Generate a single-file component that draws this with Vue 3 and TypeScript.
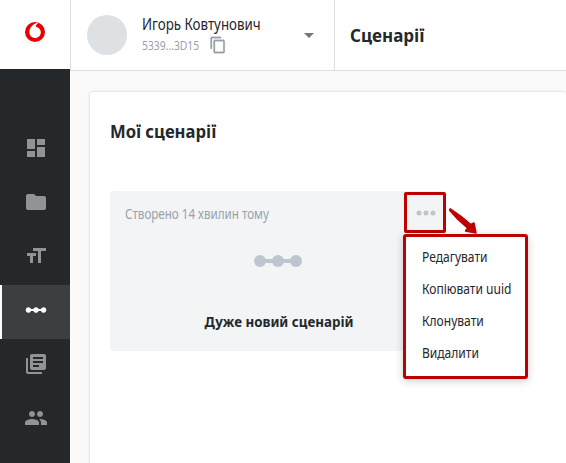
<script setup lang="ts">
interface NavItem {
  id: string
  path: string
  active?: boolean
}

const nav: NavItem[] = [
  { id: 'dashboard', path: 'M3 13h8V3H3v10zm0 8h8v-6H3v6zm10 0h8V11h-8v10zm0-18v6h8V3h-8z' },
  { id: 'files', path: 'M10 4H4c-1.1 0-1.99.9-1.99 2L2 18c0 1.1.9 2 2 2h16c1.1 0 2-.9 2-2V8c0-1.1-.9-2-2-2h-8l-2-2z' },
  { id: 'text', path: 'M9 4v3h5v12h3V7h5V4H9zm-6 8h3v7h3v-7h3V9H3v3z' },
  { id: 'scenarios', path: 'M22.300 12c0 1.500-1.200 2.700-2.700 2.700-1.200 0-2.200-.7-2.550-1.800h-2.500C14.200 14 13.200 14.700 12 14.700s-2.200-.7-2.550-1.800h-2.500C6.600 14 5.600 14.700 4.400 14.700c-1.500 0-2.700-1.200-2.700-2.700s1.200-2.700 2.700-2.700c1.200 0 2.200.7 2.550 1.800h2.500C9.800 10 10.800 9.300 12 9.300s2.200.7 2.550 1.800h2.500c.35-1.100 1.350-1.800 2.550-1.800 1.500 0 2.700 1.200 2.700 2.700z', active: true },
  { id: 'library', path: 'M4 6H2v14c0 1.1.9 2 2 2h14v-2H4V6zm16-4H8c-1.1 0-2 .9-2 2v12c0 1.1.9 2 2 2h12c1.1 0 2-.9 2-2V4c0-1.1-.9-2-2-2zm-1 9H9V9h10v2zm-4 4H9v-2h6v2zm4-8H9V5h10v2z' },
  { id: 'people', path: 'M16 11c1.66 0 2.99-1.34 2.99-3S17.66 5 16 5c-1.66 0-3 1.34-3 3s1.34 3 3 3zm-8 0c1.66 0 2.99-1.34 2.99-3S9.66 5 8 5C6.34 5 5 6.34 5 8s1.34 3 3 3zm0 2c-2.33 0-7 1.17-7 3.5V19h14v-2.5c0-2.33-4.67-3.5-7-3.5zm8 0c-.29 0-.62.02-.97.05 1.16.84 1.97 1.97 1.97 3.45V19h6v-2.5c0-2.33-4.67-3.5-7-3.5z' },
]

const actions: string[] = ['Редагувати', 'Копіювати uuid', 'Клонувати', 'Видалити']
</script>

<template>
  <div class="app">
    <aside class="sidebar">
      <div class="brand">
        <svg width="20" height="20" viewBox="0 0 20 20">
          <circle cx="10" cy="10" r="10" fill="#e60000" />
          <path d="M10.200 16C7 16 4.400 13.600 4.400 10.200 4.400 6 8 1.500 12.600.8c.5 0 .9 0 1.200.2-1.900.5-3 2-2.900 3.700 2.900.6 4.900 2.700 4.900 5.500 0 3.400-2.500 5.800-5.600 5.800z" fill="#fff" />
        </svg>
      </div>
      <nav class="nav">
        <a v-for="item in nav" :key="item.id" class="nav-item" :class="{ active: item.active }">
          <svg width="24" height="24" viewBox="0 0 24 24"><path :d="item.path" fill="currentColor" /></svg>
        </a>
      </nav>
    </aside>

    <div class="main">
      <header class="header">
        <div class="account">
          <div class="avatar"></div>
          <div class="who">
            <div class="name"><span class="narrow">Игорь Ковтунович</span></div>
            <div class="uid">
              <span class="narrow uid-text">5339...3D15</span>
              <svg width="18" height="18" viewBox="0 0 24 24">
                <path d="M16 1H4c-1.100 0-2 .9-2 2v14h2V3h12V1zm3 4H8c-1.100 0-2 .9-2 2v14c0 1.100.9 2 2 2h11c1.100 0 2-.9 2-2V7c0-1.100-.9-2-2-2zm0 16H8V7h11v14z" fill="#98a1ad" stroke="#98a1ad" stroke-width="0.4" />
              </svg>
            </div>
          </div>
          <svg class="caret" width="10" height="5" viewBox="0 0 10 5"><path d="M0 0h10L5 5z" fill="#757575" /></svg>
        </div>
        <h1 class="page-title"><span class="narrow">Сценарії</span></h1>
      </header>

      <main class="panel">
        <h2 class="section-title"><span class="narrow">Мої сценарії</span></h2>
        <article class="card">
          <div class="card-top">
            <span class="narrow created">Створено 14 хвилин тому</span>
            <button class="more" type="button">
              <svg width="20" height="6" viewBox="0 0 20 6" fill="#bfc5ce">
                <circle cx="3" cy="3" r="2.500" /><circle cx="10" cy="3" r="2.500" /><circle cx="17" cy="3" r="2.500" />
              </svg>
            </button>
          </div>
          <svg class="glyph" width="48" height="12" viewBox="0 0 48 12" fill="#bfc5ce">
            <path d="M6 4h36v4H6z" /><circle cx="6" cy="6" r="6" /><circle cx="24" cy="6" r="6" /><circle cx="42" cy="6" r="6" />
          </svg>
          <div class="card-name"><span class="narrow">Дуже новий сценарій</span></div>
          <ul class="menu">
            <li v-for="action in actions" :key="action"><span class="narrow">{{ action }}</span></li>
          </ul>
          <svg class="arrow" width="34" height="32" viewBox="0 0 34 32">
            <path d="M5.300 3.800L16 11.300L25.800 19.500L29 18L31 28L20.500 26L22.500 23L13 14.500L4.600 5.200Z" fill="#bd0000" stroke="#bd0000" stroke-width="1.500" stroke-linejoin="round" />
          </svg>
        </article>
      </main>
    </div>
  </div>
</template>

<style>
body {
  overflow: hidden;
}
</style>

<style scoped>
.app {
  display: flex;
  width: 566px;
  height: 463px;
  overflow: hidden;
  background: #fafafa;
  color: #25282b;
  font-family: "Noto Sans", "Open Sans", sans-serif;
}
.narrow {
  display: inline-block;
  transform: scaleX(0.86);
  transform-origin: left center;
  white-space: nowrap;
}
.sidebar {
  flex: none;
  width: 70px;
  background: #25282b;
}
.brand {
  display: flex;
  align-items: center;
  justify-content: center;
  height: 69px;
  background: #fff;
}
.brand svg {
  margin-bottom: 5px;
}
.nav {
  padding-top: 54px;
}
.nav-item {
  display: flex;
  align-items: center;
  justify-content: center;
  box-sizing: border-box;
  height: 54px;
  padding: 0 0 4px 2px;
  color: #929394;
}
.nav-item svg {
  display: block;
}
.nav-item.active {
  padding-left: 0;
  border-left: 2px solid #fff;
  background: #3c3f41;
  color: #fff;
}
.main {
  flex: 1;
  min-width: 0;
}
.header {
  display: flex;
  box-sizing: border-box;
  height: 71px;
  border-bottom: 1px solid #dcdfe3;
  border-left: 1px solid #dcdfe3;
  background: #fff;
}
.account {
  display: flex;
  box-sizing: border-box;
  width: 264px;
  padding-left: 16px;
  border-right: 1px solid #dcdfe3;
}
.avatar {
  width: 40px;
  height: 40px;
  margin-top: 15px;
  border-radius: 50%;
  background: #dde1e4;
}
.who {
  width: 162px;
  padding: 14px 0 0 15px;
  box-sizing: border-box;
  white-space: nowrap;
}
.name {
  height: 21px;
  font-size: 15.5px;
  line-height: 20px;
}
.uid {
  display: flex;
  align-items: center;
  height: 20px;
  color: #98a1ad;
  font-size: 12px;
}
.uid-text {
  width: 67px;
}
.caret {
  margin: 33px 0 0 15px;
}
.page-title {
  margin: 0 0 0 15px;
  font-size: 18.5px;
  font-weight: 700;
  line-height: 70px;
}
.page-title .narrow {
  transform: scaleX(0.92);
}
.panel {
  height: 400px;
  margin: 21px 0 0 20px;
  padding: 25px 20px;
  border-radius: 3px;
  background: #fff;
  box-shadow: 0 0 3px rgba(0, 0, 0, 0.2);
}
.section-title {
  height: 28px;
  margin: 0;
  font-size: 18.5px;
  font-weight: 700;
  line-height: 28px;
}
.section-title .narrow {
  transform: scaleX(0.9);
}
.card {
  position: relative;
  box-sizing: border-box;
  width: 336px;
  height: 160px;
  margin-top: 46px;
  border-radius: 4px;
  background: #f3f4f6;
}
.card-top {
  display: flex;
  justify-content: space-between;
  height: 42px;
  padding-left: 15px;
}
.created {
  color: #98a1ad;
  font-size: 13.5px;
  line-height: 46px;
}
.more {
  display: flex;
  align-items: center;
  justify-content: center;
  box-sizing: border-box;
  width: 42px;
  height: 41px;
  margin-top: 1px;
  padding: 0 0 0 1px;
  border: 3px solid #bd0000;
  border-radius: 2px;
  background: none;
}
.glyph {
  display: block;
  margin: 22px auto 0;
}
.card-name {
  height: 20px;
  margin-top: 44px;
  padding-left: 2px;
  text-align: center;
  font-size: 14.5px;
  font-weight: 700;
  line-height: 20px;
}
.card-name .narrow {
  transform: scaleX(0.92);
  transform-origin: center;
}
.created.narrow {
  transform: scaleX(0.86);
}
.arrow {
  position: absolute;
  top: 14px;
  left: 335px;
}
.menu {
  position: absolute;
  top: 43px;
  left: 293px;
  box-sizing: border-box;
  width: 125px;
  height: 145px;
  margin: 0;
  padding: 4px 0 0 16px;
  border: 3px solid #bd0000;
  border-radius: 3px;
  background: #fff;
  box-shadow: 0 2px 8px rgba(0, 0, 0, 0.2);
  list-style: none;
}
.menu li {
  height: 32px;
  font-size: 14px;
  line-height: 32px;
  white-space: nowrap;
}
</style>
